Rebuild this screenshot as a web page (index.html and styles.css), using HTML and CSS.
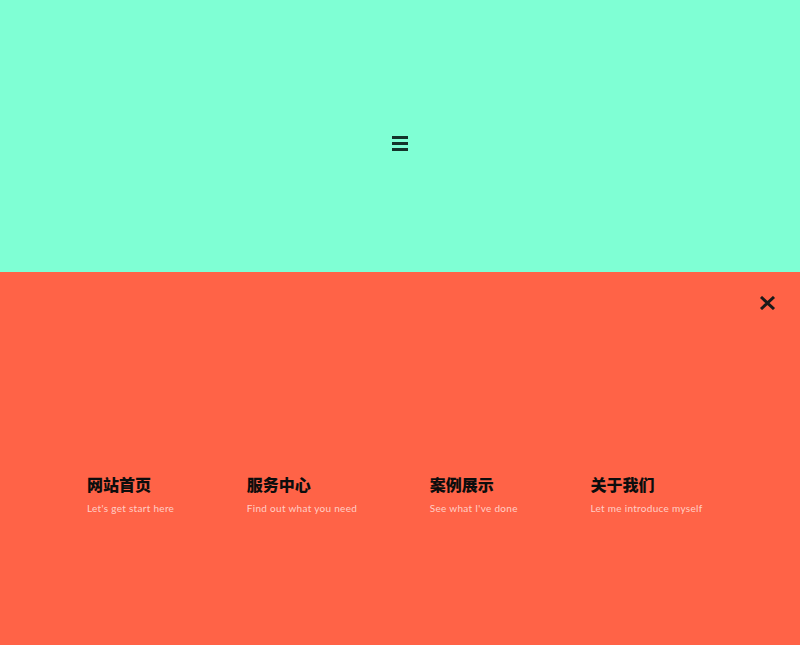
FILE: index.html
```html
<!DOCTYPE html>
<html lang="zh">
<head>
<meta charset="utf-8">
<link rel="stylesheet" href="styles.css">
</head>
<body>
<header class="top">
  <button class="burger" aria-label="menu">
    <span></span><span></span><span></span>
  </button>
</header>
<nav class="menu">
  <button class="close" aria-label="close">
    <svg width="17" height="14" viewBox="0 0 17 14"><path d="M2 1 L15 13 M15 1 L2 13" stroke="#1a1a1a" stroke-width="3" stroke-linecap="butt"/></svg>
  </button>
  <ul class="items">
    <li class="item"><span class="title">网站首页</span><span class="sub">Let's get start here</span></li>
    <li class="item"><span class="title">服务中心</span><span class="sub">Find out what you need</span></li>
    <li class="item"><span class="title">案例展示</span><span class="sub">See what I've done</span></li>
    <li class="item"><span class="title">关于我们</span><span class="sub">Let me introduce myself</span></li>
  </ul>
</nav>
</body>
</html>
```

FILE: styles.css
```css
* { box-sizing: border-box; }
html, body { margin: 0; padding: 0; }
body {
  width: 800px;
  height: 645px;
  overflow: hidden;
  font-family: "Noto Sans", "Noto Sans CJK SC", sans-serif;
}
.top {
  height: 272px;
  background: #7fffd4;
  display: flex;
  align-items: center;
  justify-content: center;
  padding-top: 14px;
}
.burger {
  background: none;
  border: 0;
  padding: 0;
  width: 16px;
  display: flex;
  flex-direction: column;
  gap: 3px;
}
.burger span {
  display: block;
  width: 16px;
  height: 3px;
  background: #14332a;
}
.menu {
  height: 373px;
  background: #ff6347;
  position: relative;
  padding-top: 202px;
}
.close {
  position: absolute;
  top: 24px;
  right: 24px;
  background: none;
  border: 0;
  padding: 0;
  line-height: 0;
}
.items {
  list-style: none;
  margin: 0;
  padding: 0 0 0 87px;
  display: flex;
  gap: 72.6px;
}
.item {
  display: flex;
  flex-direction: column;
}
.title {
  font-family: "Noto Sans CJK SC", sans-serif;
  font-weight: 900;
  font-size: 16px;
  line-height: 20px;
  color: #0d0d0d;
}
.sub {
  margin-top: 8px;
  font-family: "Lato", "Noto Sans", sans-serif;
  font-weight: 400;
  font-size: 10px;
  line-height: 12px;
  letter-spacing: 0.3px;
  color: rgba(255, 255, 255, 0.7);
  white-space: nowrap;
}
```
